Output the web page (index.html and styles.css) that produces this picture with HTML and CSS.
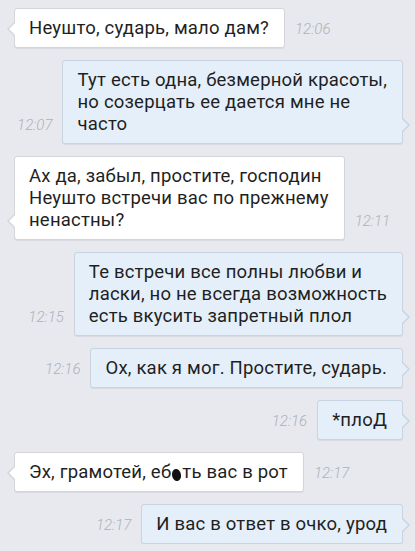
FILE: index.html
```html
<!DOCTYPE html>
<html lang="ru">
<head>
<meta charset="utf-8">
<link rel="stylesheet" href="styles.css">
</head>
<body>
<div class="chat">
  <div class="row in">
    <div class="bubble">Неушто, сударь, мало дам?</div>
    <span class="time">12:06</span>
  </div>
  <div class="row out">
    <span class="time">12:07</span>
    <div class="bubble">Тут есть одна, безмерной красоты,<br>но созерцать ее дается мне не<br>часто</div>
  </div>
  <div class="row in">
    <div class="bubble">Ах да, забыл, простите, господин<br>Неушто встречи вас по прежнему<br>ненастны?</div>
    <span class="time">12:11</span>
  </div>
  <div class="row out">
    <span class="time">12:15</span>
    <div class="bubble">Те встречи все полны любви и<br>ласки, но не всегда возможность<br>есть вкусить запретный плол</div>
  </div>
  <div class="row out">
    <span class="time">12:16</span>
    <div class="bubble">Ох, как я мог. Простите, сударь.</div>
  </div>
  <div class="row out">
    <span class="time">12:16</span>
    <div class="bubble">*плоД</div>
  </div>
  <div class="row in">
    <div class="bubble">Эх, грамотей, еб<span class="blot">а</span>ть вас в рот</div>
    <span class="time">12:17</span>
  </div>
  <div class="row out">
    <span class="time">12:17</span>
    <div class="bubble">И вас в ответ в очко, урод</div>
  </div>
</div>
</body>
</html>
```
FILE: styles.css
```css
html, body {
  margin: 0;
  padding: 0;
  background: #e8e9ee;
}
body {
  font-family: Roboto, "Noto Sans", sans-serif;
  color: #1f1f1f;
}
.chat {
  display: flex;
  flex-direction: column;
  gap: 12px;
  padding: 8px 12px 0 14px;
}
.row {
  display: flex;
  align-items: flex-end;
  gap: 10px;
}
.row.out {
  justify-content: flex-end;
}
.bubble {
  position: relative;
  font-size: 18.5px;
  letter-spacing: 0.2px;
  line-height: 22px;
  padding: 8px 15px 8px 14px;
  border: 1px solid #d3d5da;
  border-radius: 3px;
  background: #ffffff;
  white-space: nowrap;
  box-shadow: 0 1px 0 rgba(0, 0, 0, 0.06);
}
.out .bubble {
  background: #e4eff9;
  border-color: #c8d4df;
}
.bubble::before,
.bubble::after {
  content: "";
  position: absolute;
  bottom: 10px;
  width: 0;
  height: 0;
  border-top: 8px solid transparent;
  border-bottom: 8px solid transparent;
}
.in .bubble::before {
  left: -8px;
  border-right: 8px solid #d3d5da;
}
.in .bubble::after {
  left: -6px;
  border-right: 7px solid #ffffff;
  bottom: 11px;
  border-top-width: 7px;
  border-bottom-width: 7px;
}
.out .bubble::before {
  right: -8px;
  border-left: 8px solid #c8d4df;
}
.out .bubble::after {
  right: -6px;
  border-left: 7px solid #e4eff9;
  bottom: 11px;
  border-top-width: 7px;
  border-bottom-width: 7px;
}
.time {
  font-size: 15px;
  font-style: italic;
  font-weight: 300;
  color: #adb1b9;
  padding-bottom: 10px;
}
.blot {
  display: inline-block;
  background: #111;
  color: #111;
  border-radius: 50%;
  width: 9px;
  height: 12px;
  font-size: 9px;
  line-height: 12px;
  letter-spacing: 0;
  text-align: center;
  vertical-align: 0;
  margin: 0 1px;
  transform: rotate(-10deg);
}
```
